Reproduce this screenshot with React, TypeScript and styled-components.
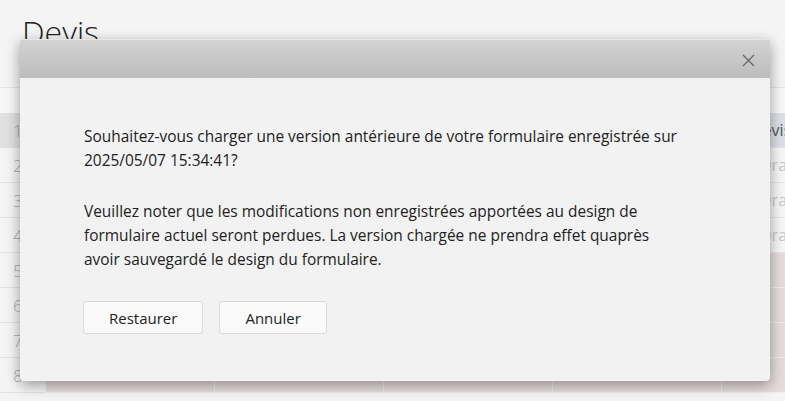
import styled, { createGlobalStyle } from "styled-components";

const GlobalStyle = createGlobalStyle`
  html, body {
    margin: 0;
    padding: 0;
    background: #f4f4f4;
    font-family: "Open Sans", "Liberation Sans", sans-serif;
    overflow: hidden;
  }
`;

const ROWS = [1, 2, 3, 4, 5, 6, 7, 8];

const Page = styled.div`
  position: relative;
  width: 785px;
  height: 401px;
  overflow: hidden;
  background: #f4f4f4;
`;
const Title = styled.h1`
  margin: 0;
  padding: 10px 0 0 22px;
  height: 88px;
  box-sizing: border-box;
  font-size: 32px;
  font-weight: 300;
  color: #222;
  border-bottom: 1px solid #e4e4e4;
`;
const Toolbar = styled.div`
  height: 25px;
  background: #f7f7f7;
`;
const Grid = styled.div`
  display: grid;
  grid-template-columns: 45px repeat(4, 169px) 1fr;
`;
const NumCell = styled.div<{ head?: boolean }>`
  height: 34px;
  box-sizing: border-box;
  border-bottom: 1px solid #e2e2e2;
  background: ${(p) => (p.head ? "#e0e0e0" : "#f4f4f4")};
  color: #aaa;
  font-size: 17px;
  font-weight: 300;
  display: flex;
  align-items: center;
  padding-left: 13px;
  height: 35px;
`;
const Cell = styled.div<{ tone: "head" | "plain" | "pink" }>`
  height: 35px;
  box-sizing: border-box;
  border-bottom: 1px solid ${(p) => (p.tone === "pink" ? "#f2ecec" : "#e6e6e6")};
  border-left: 1px solid ${(p) => (p.tone === "pink" ? "#f2ecec" : "#ececec")};
  background: ${(p) =>
    p.tone === "head" ? "#dcdfe5" : p.tone === "pink" ? "#e6dcdd" : "#f6f6f6"};
  color: ${(p) => (p.tone === "head" ? "#555" : "#c8c8c8")};
  font-size: 16px;
  display: flex;
  align-items: center;
  white-space: nowrap;
  overflow: hidden;
`;
const CellText = styled.span<{ indent: number }>`
  padding-left: ${(p) => p.indent}px;
`;

const Dialog = styled.div`
  position: absolute;
  left: 20px;
  top: 39px;
  width: 750px;
  height: 342px;
  display: flex;
  flex-direction: column;
  background: #f2f2f2;
  border-radius: 4px;
  box-shadow: 0 4px 14px rgba(0, 0, 0, 0.38);
  overflow: hidden;
`;
const DialogHeader = styled.div`
  height: 39px;
  flex-shrink: 0;
  box-sizing: border-box;
  border-top: 1px solid #e6e6e6;
  background: linear-gradient(#d3d3d3, #bcbcbc);
  display: flex;
  align-items: center;
  justify-content: flex-end;
  padding-right: 14px;
`;
const CloseButton = styled.button`
  width: 16px;
  height: 16px;
  padding: 0;
  border: none;
  background: none;
  display: flex;
  align-items: center;
  justify-content: center;
  margin-top: 2px;
`;
const DialogBody = styled.div`
  padding: 46px 40px 0 64px;
  color: #222;
  font-size: 15.45px;
  line-height: 24px;
`;
const Paragraph = styled.p`
  margin: 0 0 27px;
`;
const Actions = styled.div`
  display: flex;
  gap: 16px;
  margin-top: 30px;
  margin-left: -1px;
`;
const Button = styled.button`
  height: 33px;
  padding: 0 25px;
  background: #fafafa;
  border: 1px solid #dadada;
  border-radius: 3px;
  font-family: "Open Sans", "Liberation Sans", sans-serif;
  font-size: 15px;
  color: #222;
`;

export default function App() {
  return (
    <>
      <GlobalStyle />
      <Page>
        <Title>Devis</Title>
        <Toolbar />
        <Grid>
          {ROWS.map((n) => {
            const tone = n === 1 ? "head" : n <= 4 ? "plain" : "pink";
            return [
              <NumCell key={`n${n}`} head={n === 1}>
                {n}
              </NumCell>,
              ...[0, 1, 2, 3].map((c) => <Cell key={`${n}-${c}`} tone={tone} />),
              <Cell key={`${n}-last`} tone={tone}>
                {n === 1 && <CellText indent={29}>Devis</CellText>}
                {n > 1 && n <= 4 && <CellText indent={38}>Draft</CellText>}
              </Cell>,
            ];
          })}
        </Grid>

        <Dialog role="dialog">
          <DialogHeader>
            <CloseButton aria-label="Fermer">
              <svg width="13" height="13" viewBox="0 0 13 13">
                <path
                  d="M1 1 L12 12 M12 1 L1 12"
                  stroke="#666"
                  strokeWidth="1.3"
                  fill="none"
                />
              </svg>
            </CloseButton>
          </DialogHeader>
          <DialogBody>
            <Paragraph>
              Souhaitez-vous charger une version antérieure de votre formulaire
              enregistrée sur 2025/05/07 15:34:41?
            </Paragraph>
            <Paragraph>
              Veuillez noter que les modifications non enregistrées apportées au
              design de
              <br />
              formulaire actuel seront perdues. La version chargée ne prendra
              effet quaprès
              <br />
              avoir sauvegardé le design du formulaire.
            </Paragraph>
            <Actions>
              <Button>Restaurer</Button>
              <Button>Annuler</Button>
            </Actions>
          </DialogBody>
        </Dialog>
      </Page>
    </>
  );
}
